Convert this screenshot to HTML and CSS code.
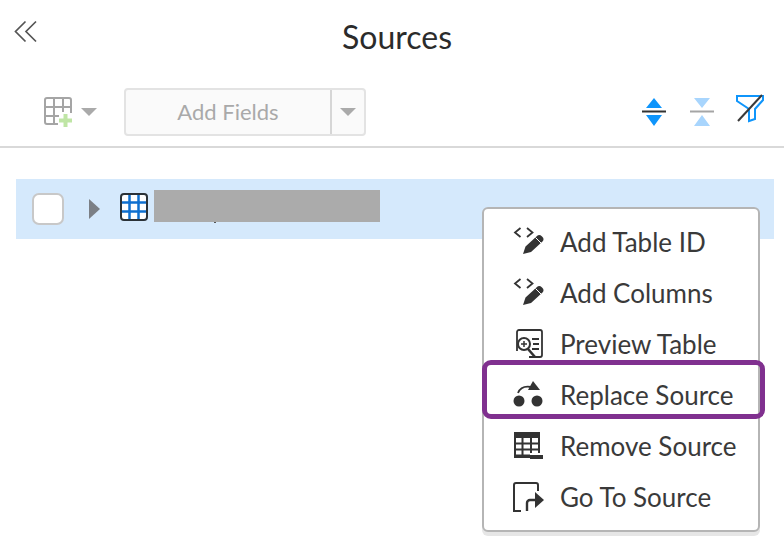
FILE: index.html
```html
<!DOCTYPE html>
<html lang="en">
<head>
<meta charset="utf-8">
<title>Sources</title>
<link rel="stylesheet" href="styles.css">
</head>
<body>
<div class="page">
  <header class="title-bar">
    <svg class="collapse" width="24" height="24" viewBox="0 0 24 24"><path d="M11.500 1.500 1.500 11.500 11.500 21.500M22 1.500 12 11.500 22 21.500" fill="none" stroke="#555" stroke-width="1.700"/></svg>
    <h1>Sources</h1>
  </header>
  <div class="toolbar">
    <div class="add-table">
      <svg width="30" height="30" viewBox="0 0 30 30"><path d="M15 27H4a2 2 0 0 1-2-2V3a2 2 0 0 1 2-2h22a2 2 0 0 1 2 2v13M2 10h26M2 19h14M11 1v26M20 1v14" fill="none" stroke="#a5a5a5" stroke-width="2"/><path d="M20.500 17h4v4.500H29v4h-4.500V30h-4v-4.500H16v-4h4.500z" fill="#bfe5a5"/></svg>
      <span class="caret"></span>
    </div>
    <div class="split-btn">
      <span class="split-main">Add Fields</span>
      <span class="split-arrow"><span class="caret"></span></span>
    </div>
    <div class="tools">
      <svg width="26" height="28" viewBox="0 0 26 28"><path d="M13 0 21 10H5zM13 28 21 17H5z" fill="#0f95fb"/><rect y="12.500" width="24" height="2" x="1" fill="#333"/></svg>
      <svg width="26" height="28" viewBox="0 0 26 28"><path d="M5 0H21L13 10zM5 28H21L13 17z" fill="#a8d5fd"/><rect y="12.500" width="24" height="2" x="1" fill="#a5a5a5"/></svg>
      <svg class="filter-icon" width="30" height="32" viewBox="0 0 30 32"><path d="M2 3H28V7L20 16V26L14 28V16L2 8z" fill="none" stroke="#0f95fb" stroke-width="2"/><path d="M3 28 27 2" stroke="#3a3a3a" stroke-width="2"/></svg>
    </div>
  </div>
  <main class="content">
    <div class="source-row">
      <span class="check"></span>
      <span class="expander"></span>
      <svg class="grid-icon" width="28" height="28" viewBox="0 0 28 28"><rect x="1" y="1" width="26" height="26" rx="3" fill="#fff" stroke="#2b3238" stroke-width="2"/><path d="M2 9.500H26M2 18.500H26M9.500 2V26M18.500 2V26" stroke="#0f70d0" stroke-width="2.500"/></svg>
      <span class="redacted"></span>
    </div>
  </main>

  <ul class="menu">
    <li class="menu-item">
      <svg width="32" height="30" viewBox="0 0 32 30"><path d="M7.500 1 2 5.500 7.500 10M14 1 19.500 5.500 14 10" fill="none" stroke="#333" stroke-width="1.800"/><path d="M10 27 12.500 19.500 24 9a3 3 0 0 1 4.500 0l1 1a3 3 0 0 1 0 4.500L18 25z" fill="#333"/><path d="M22.500 10.500 28 16" stroke="#fff" stroke-width="1"/></svg>
      <span>Add Table ID</span>
    </li>
    <li class="menu-item">
      <svg width="32" height="30" viewBox="0 0 32 30"><path d="M7.500 1 2 5.500 7.500 10M14 1 19.500 5.500 14 10" fill="none" stroke="#333" stroke-width="1.800"/><path d="M10 27 12.500 19.500 24 9a3 3 0 0 1 4.500 0l1 1a3 3 0 0 1 0 4.500L18 25z" fill="#333"/><path d="M22.500 10.500 28 16" stroke="#fff" stroke-width="1"/></svg>
      <span>Add Columns</span>
    </li>
    <li class="menu-item">
      <svg width="32" height="30" viewBox="0 0 32 30"><path d="M4 22V3a2 2 0 0 1 2-2h21a2 2 0 0 1 2 2v23a2 2 0 0 1-2 2H16" fill="none" stroke="#333" stroke-width="1.800"/><circle cx="11" cy="15" r="6" fill="#fff" stroke="#333" stroke-width="2"/><path d="M11 12v6M8 15h6" stroke="#333" stroke-width="1.500"/><path d="M15 20 22 28" stroke="#333" stroke-width="2.600"/><path d="M19 10h7M20 15h6M19 20h7" stroke="#333" stroke-width="1.800"/></svg>
      <span>Preview Table</span>
    </li>
    <li class="menu-item">
      <svg width="32" height="30" viewBox="0 0 32 30"><circle cx="6" cy="21" r="5.500" fill="#333"/><circle cx="24" cy="21" r="5.500" fill="#333"/><path d="M5 13C7 8 12 6 18 7" fill="none" stroke="#333" stroke-width="1.800"/><path d="M20 1 27 10H15z" fill="#333"/></svg>
      <span>Replace Source</span>
    </li>
    <li class="menu-item">
      <svg width="32" height="30" viewBox="0 0 32 30"><path d="M1 1H27V7H1z" fill="#333"/><path d="M2 7V26H17M1 12.500H26M1 18.500H26M1 24.500H17M9.500 7V26M18 7V22M26 7V22" fill="none" stroke="#333" stroke-width="2"/><rect x="17" y="24" width="13" height="4" fill="#333"/></svg>
      <span>Remove Source</span>
    </li>
    <li class="menu-item">
      <svg width="32" height="30" viewBox="0 0 32 30"><path d="M8 29H1V3a2 2 0 0 1 2-2h20a2 2 0 0 1 2 2v6" fill="none" stroke="#333" stroke-width="2"/><path d="M14 29V21a3 3 0 0 1 3-3h8" fill="none" stroke="#333" stroke-width="2.400"/><path d="M22 10 31 18 22 26z" fill="#333"/></svg>
      <span>Go To Source</span>
    </li>
  </ul>
  <div class="highlight"></div>
</div>
</body>
</html>
```
FILE: styles.css
```css
* { box-sizing: border-box; }
html, body { margin: 0; padding: 0; }
body {
  width: 784px;
  height: 548px;
  overflow: hidden;
  background: #fff;
  font-family: Lato, "Open Sans", sans-serif;
}
.page { position: relative; width: 784px; height: 548px; }

.title-bar {
  position: relative;
  height: 76px;
  display: flex;
  justify-content: center;
  padding: 16px 0 0 10px;
}
.collapse { position: absolute; left: 14px; top: 20px; }
.title-bar h1 {
  margin: 0;
  font-size: 32px;
  line-height: 42px;
  font-weight: 400;
  color: #2b2b2b;
}

.toolbar {
  display: flex;
  align-items: flex-start;
  height: 72px;
  padding: 12px 19px 0 43px;
  border-bottom: 2px solid #d9d9d9;
}
.add-table { display: flex; align-items: center; gap: 8px; width: 81px; height: 48px; }
.caret {
  display: block;
  width: 0;
  height: 0;
  border-left: 8px solid transparent;
  border-right: 8px solid transparent;
  border-top: 8px solid #aaa;
}
.split-btn {
  display: flex;
  width: 242px;
  height: 48px;
  background: #fafafa;
  border: 2px solid #e3e3e3;
  border-radius: 4px;
}
.split-main {
  flex: 1;
  text-align: center;
  font-size: 22px;
  line-height: 44px;
  color: #a9a9a9;
  border-right: 2px solid #d6d6d6;
}
.split-arrow {
  width: 32px;
  display: flex;
  align-items: center;
  justify-content: center;
}
.tools {
  margin-left: auto;
  height: 48px;
  display: flex;
  align-items: center;
  gap: 22px;
}
.filter-icon { margin: -6px 0 0 -2px; }

.content { padding: 31px 10px 0 16px; }
.source-row {
  height: 60px;
  background: #d5e9fc;
  display: flex;
  align-items: center;
  padding-left: 16px;
}
.check {
  width: 32px;
  height: 32px;
  background: #fff;
  border: 2px solid #c8c8c8;
  border-radius: 7px;
}
.expander {
  margin-left: 25px;
  width: 0;
  height: 0;
  border-top: 10px solid transparent;
  border-bottom: 10px solid transparent;
  border-left: 11px solid #7b7f85;
}
.grid-icon { margin: 0 0 4px 20px; }
.redacted {
  position: relative;
  margin-left: 6px;
  margin-bottom: 6px;
  width: 226px;
  height: 32px;
  background: #ababab;
}
.redacted::after {
  content: "";
  position: absolute;
  left: 60px;
  top: 32px;
  width: 2px;
  height: 1px;
  background: #555;
}

.menu {
  position: absolute;
  left: 482px;
  top: 207px;
  width: 278px;
  height: 325px;
  margin: 0;
  padding: 7px 0 0 29px;
  list-style: none;
  background: #fff;
  border: 2px solid #b5b5b5;
  border-radius: 6px;
  box-shadow: 0 4px 0 #e6e6e6;
}
.menu-item {
  display: flex;
  align-items: center;
  gap: 15px;
  height: 51px;
  font-size: 26px;
  color: #3a3a3a;
  white-space: nowrap;
}
.highlight {
  position: absolute;
  left: 482px;
  top: 360px;
  width: 283px;
  height: 59px;
  border: 5px solid #80308f;
  border-radius: 9px;
}
```
